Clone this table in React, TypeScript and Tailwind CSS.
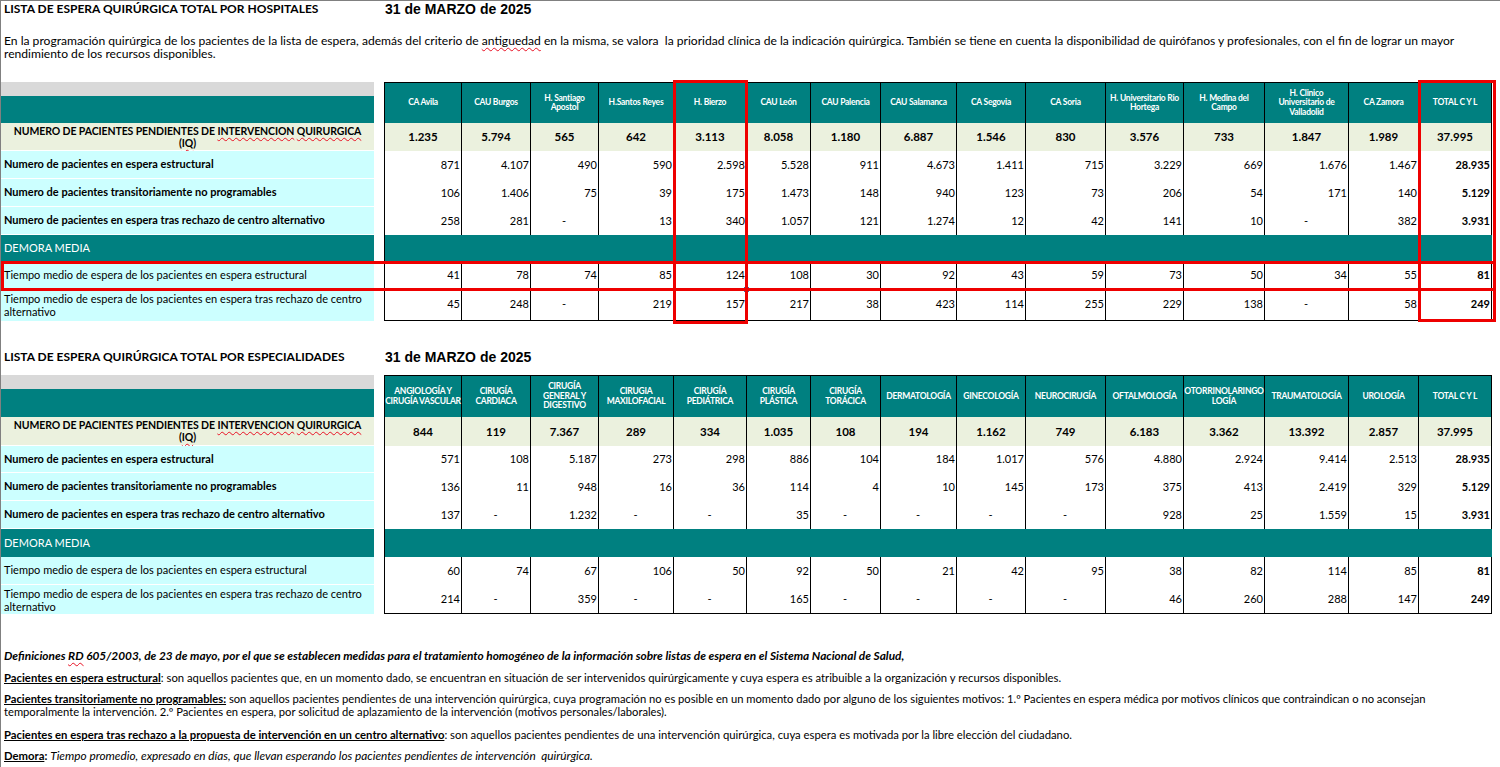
import React from "react";

const COLS =
  "grid grid-cols-[373px_10px_78px_69px_68px_75px_73px_64px_70px_76px_69px_80px_78px_81px_84px_70px_73px]";

type Tab = {
  heads: string[][];
  iq: string[];
  rows: string[][];
};

const hospitales: Tab = {
  heads: [
    ["CA Avila"],
    ["CAU Burgos"],
    ["H. Santiago", "Apostol"],
    ["H.Santos Reyes"],
    ["H. Bierzo"],
    ["CAU León"],
    ["CAU Palencia"],
    ["CAU Salamanca"],
    ["CA Segovia"],
    ["CA Soria"],
    ["H. Universitario Rio", "Hortega"],
    ["H. Medina del", "Campo"],
    ["H. Clinico", "Universitario de", "Valladolid"],
    ["CA Zamora"],
    ["TOTAL C Y L"],
  ],
  iq: ["1.235", "5.794", "565", "642", "3.113", "8.058", "1.180", "6.887", "1.546", "830", "3.576", "733", "1.847", "1.989", "37.995"],
  rows: [
    ["871", "4.107", "490", "590", "2.598", "5.528", "911", "4.673", "1.411", "715", "3.229", "669", "1.676", "1.467", "28.935"],
    ["106", "1.406", "75", "39", "175", "1.473", "148", "940", "123", "73", "206", "54", "171", "140", "5.129"],
    ["258", "281", "-", "13", "340", "1.057", "121", "1.274", "12", "42", "141", "10", "-", "382", "3.931"],
    ["41", "78", "74", "85", "124", "108", "30", "92", "43", "59", "73", "50", "34", "55", "81"],
    ["45", "248", "-", "219", "157", "217", "38", "423", "114", "255", "229", "138", "-", "58", "249"],
  ],
};

const especialidades: Tab = {
  heads: [
    ["ANGIOLOGÍA Y", "CIRUGÍA VASCULAR"],
    ["CIRUGÍA", "CARDIACA"],
    ["CIRUGÍA", "GENERAL Y", "DIGESTIVO"],
    ["CIRUGIA", "MAXILOFACIAL"],
    ["CIRUGÍA", "PEDIÁTRICA"],
    ["CIRUGÍA", "PLÁSTICA"],
    ["CIRUGÍA", "TORÁCICA"],
    ["DERMATOLOGÍA"],
    ["GINECOLOGÍA"],
    ["NEUROCIRUGÍA"],
    ["OFTALMOLOGÍA"],
    ["OTORRINOLARINGO", "LOGÍA"],
    ["TRAUMATOLOGÍA"],
    ["UROLOGÍA"],
    ["TOTAL C Y L"],
  ],
  iq: ["844", "119", "7.367", "289", "334", "1.035", "108", "194", "1.162", "749", "6.183", "3.362", "13.392", "2.857", "37.995"],
  rows: [
    ["571", "108", "5.187", "273", "298", "886", "104", "184", "1.017", "576", "4.880", "2.924", "9.414", "2.513", "28.935"],
    ["136", "11", "948", "16", "36", "114", "4", "10", "145", "173", "375", "413", "2.419", "329", "5.129"],
    ["137", "-", "1.232", "-", "-", "35", "-", "-", "-", "-", "928", "25", "1.559", "15", "3.931"],
    ["60", "74", "67", "106", "50", "92", "50", "21", "42", "95", "38", "82", "114", "85", "81"],
    ["214", "-", "359", "-", "-", "165", "-", "-", "-", "-", "46", "260", "288", "147", "249"],
  ],
};

// red spell-check squiggle, as in the spreadsheet
function Sq({ children }: { children: React.ReactNode }) {
  return (
    <span className="underline decoration-wavy decoration-[#e81123] decoration-[1px] underline-offset-[2px]">
      {children}
    </span>
  );
}

function Values({ vals, last }: { vals: string[]; last?: boolean }) {
  return (
    <>
      {vals.map((v, i) => (
        <div
          key={i}
          className={`flex items-center border-r border-black bg-white pr-[1px] text-[11px] ${
            v === "-" ? "justify-center" : "justify-end"
          } ${i === 0 ? "border-l" : ""} ${i === 14 ? "font-bold" : ""} ${last ? "border-b" : ""}`}
        >
          {v}
        </div>
      ))}
    </>
  );
}

function DataTable({ t, rowsClass }: { t: Tab; rowsClass: string }) {
  const labels = [
    "Numero de pacientes en espera estructural",
    "Numero de pacientes transitoriamente no programables",
    "Numero de pacientes en espera tras rechazo de centro alternativo",
  ];
  return (
    <div className={`${COLS} ${rowsClass}`}>
      {/* header */}
      <div className="flex flex-col">
        <div className="h-[14px] bg-[#d9d9d9]" />
        <div className="flex-1 bg-[#008080]" />
      </div>
      <div />
      {t.heads.map((h, i) => (
        <div
          key={i}
          className={`flex items-center justify-center border-t border-r border-black bg-[#008080] text-center text-[8.5px] font-bold leading-[9.5px] tracking-[-0.25px] whitespace-nowrap text-white ${
            i === 0 ? "border-l" : ""
          }`}
        >
          <div>
            {h.map((l, j) => (
              <div key={j}>{l}</div>
            ))}
          </div>
        </div>
      ))}

      {/* IQ */}
      <div className="flex items-center justify-center border-b border-white bg-[#ebf1de] text-center text-[10.5px] font-bold leading-[12px] tracking-[-0.1px] whitespace-nowrap">
        <div>
          NUMERO DE PACIENTES PENDIENTES DE <Sq>INTERVENCION</Sq> <Sq>QUIRURGICA</Sq>
          <br />(<Sq>IQ</Sq>)
        </div>
      </div>
      <div />
      {t.iq.map((v, i) => (
        <div
          key={i}
          className={`flex items-center justify-center border-r border-black bg-[#ebf1de] text-[11.5px] font-bold ${
            i === 0 ? "border-l" : ""
          }`}
        >
          {v}
        </div>
      ))}

      {labels.map((l, r) => (
        <React.Fragment key={l}>
          <div className="flex items-center border-b border-white bg-[#ccffff] pl-[3px] text-[11px] font-bold">{l}</div>
          <div />
          <Values vals={t.rows[r]} />
        </React.Fragment>
      ))}

      {/* demora */}
      <div className="flex items-center bg-[#008080] pl-[3px] text-[11px] text-white">DEMORA MEDIA</div>
      <div />
      <div className="col-span-15 border-l border-black bg-[#008080]" />

      <div className="flex items-center border-b border-white bg-[#ccffff] pl-[3px] text-[11px]">
        Tiempo medio de espera de los pacientes en espera estructural
      </div>
      <div />
      <Values vals={t.rows[3]} />

      <div className="flex items-center bg-[#ccffff] pl-[3px] text-[11px] leading-[13px]">
        <div>
          Tiempo medio de espera de los pacientes en espera tras rechazo de centro
          <br />
          alternativo
        </div>
      </div>
      <div />
      <Values vals={t.rows[4]} last />
    </div>
  );
}

function Title({ text }: { text: string }) {
  return (
    <div className="flex h-[16px] items-center">
      <div className="w-[384px] pl-[3px] text-[12px] font-bold">{text}</div>
      <div className="font-['Liberation_Sans',Arial,sans-serif] text-[14px] font-bold">31 de MARZO de 2025</div>
    </div>
  );
}

export default function App() {
  return (
    <div className="h-[767px] w-[1500px] overflow-hidden border-t border-l border-[#808080] bg-white font-[Lato,'Liberation_Sans',sans-serif] text-black">
      <Title text="LISTA DE ESPERA QUIRÚRGICA TOTAL POR HOSPITALES" />

      <p className="mt-[17px] whitespace-nowrap pl-[3px] text-[12.1px] leading-[13px]">
        En la programación quirúrgica de los pacientes de la lista de espera, además del criterio de <Sq>antiguedad</Sq> en la
        misma, se valora&nbsp; la prioridad clínica de la indicación quirúrgica. También se tiene en cuenta la disponibilidad de
        quirófanos y profesionales, con el fin de lograr un mayor
        <br />
        rendimiento de los recursos disponibles.
      </p>

      <div className="relative mt-[22px]">
        <DataTable t={hospitales} rowsClass="grid-rows-[41px_28px_28px_28px_28px_27px_27px_32px]" />
        {/* selected cell */}
        <div className="absolute left-[673px] top-[180px] h-[28px] w-[74px] border-r-2 border-b-2 border-[#2e75b6]" />
        <div className="absolute left-[743px] top-[205px] h-[5px] w-[5px] bg-[#2e75b6]" />
        {/* red highlights */}
        <div className="absolute left-[672px] top-[-2px] h-[244px] w-[75px] border-[3px] border-[#ee0000]" />
        <div className="absolute left-[1417px] top-[-2px] h-[242px] w-[78px] border-[3px] border-[#ee0000]" />
        <div className="absolute left-0 top-[179px] h-[30px] w-[1495px] border-[3px] border-[#ee0000]" />
      </div>

      <div className="mt-[28px]">
        <Title text="LISTA DE ESPERA QUIRÚRGICA TOTAL POR ESPECIALIDADES" />
      </div>

      <div className="mt-[10px]">
        <DataTable t={especialidades} rowsClass="grid-rows-[42px_29px_27px_28px_28px_28px_28px_29px]" />
      </div>

      <div className="mt-[35px] pl-[3px] text-[11.3px] leading-[13px]">
        <p className="text-[11.85px] font-bold italic">
          Definiciones <Sq>RD</Sq> 605/2003, de 23 de mayo, por el que se establecen medidas para el tratamiento homogéneo de la
          información sobre listas de espera en el Sistema Nacional de Salud,
        </p>
        <p className="mt-[9px]">
          <b className="underline">Pacientes en espera estructural</b>: son aquellos pacientes que, en un momento dado, se encuentran
          en situación de ser intervenidos quirúrgicamente y cuya espera es atribuible a la organización y recursos disponibles.
        </p>
        <p className="mt-[8px] whitespace-nowrap text-[11.2px]">
          <b className="underline">Pacientes transitoriamente no programables:</b> son aquellos pacientes pendientes de una
          intervención quirúrgica, cuya programación no es posible en un momento dado por alguno de los siguientes motivos: 1.º
          Pacientes en espera médica por motivos clínicos que contraindican o no aconsejan
          <br />
          temporalmente la intervención. 2.º Pacientes en espera, por solicitud de aplazamiento de la intervención (motivos
          personales/laborales).
        </p>
        <p className="mt-[10px]">
          <b className="underline">Pacientes en espera tras rechazo a la propuesta de intervención en un centro alternativo</b>: son
          aquellos pacientes pendientes de una intervención quirúrgica, cuya espera es motivada por la libre elección del ciudadano.
        </p>
        <p className="mt-[8px]">
          <b>
            <span className="underline">Demora</span>:
          </b>{" "}
          <i className="text-[11.8px]">
            Tiempo promedio, expresado en días, que llevan esperando los pacientes pendientes de intervención&nbsp; quirúrgica.
          </i>
        </p>
      </div>
    </div>
  );
}
